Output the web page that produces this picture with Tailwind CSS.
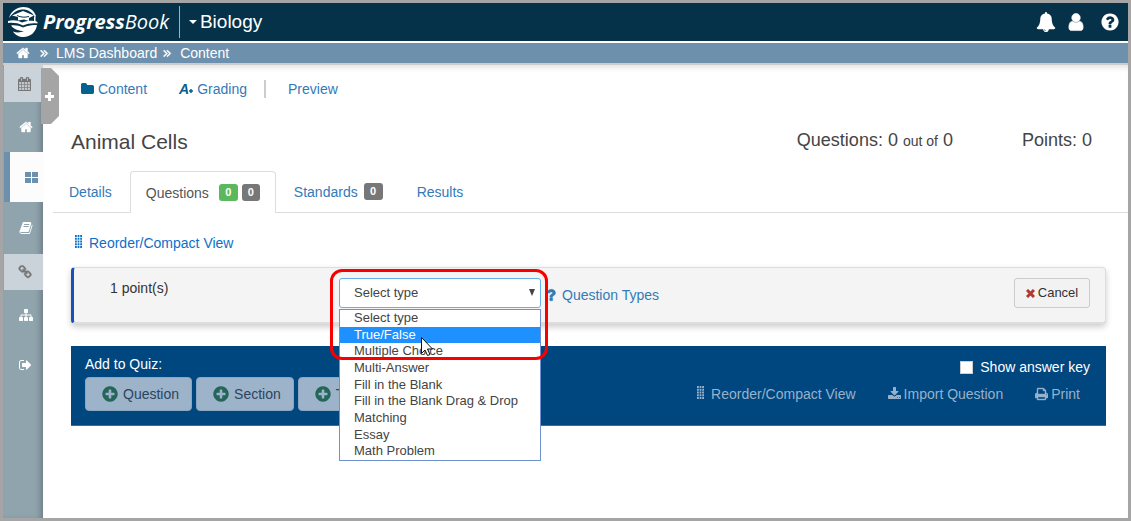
<!DOCTYPE html>
<html lang="en">
<head>
<meta charset="utf-8">
<meta name="viewport" content="width=device-width, initial-scale=1">
<title>Animal Cells - ProgressBook</title>
<script src="https://cdn.jsdelivr.net/npm/@tailwindcss/browser@4"></script>
</head>
<body class="bg-white font-['Liberation_Sans',Arial,sans-serif] text-sm leading-5 text-[#333]">
<svg class="hidden" aria-hidden="true">
  <symbol id="home" viewBox="0 0 1792 1792"><path d="M1472 992v480q0 26-19 45t-45 19h-384v-384h-256v384h-384q-26 0-45-19t-19-45v-480q0-1 .5-3t.5-3l575-474 575 474q1 2 1 6zm223-69l-62 74q-8 9-21 11h-3q-13 0-21-7l-692-577-692 577q-12 8-24 7-13-2-21-11l-62-74q-8-10-7-23.5t11-21.5l719-599q32-26 76-26t76 26l244 204v-195q0-14 9-23t23-9h192q14 0 23 9t9 23v408l219 182q10 8 11 21.5t-7 23.5z" stroke="currentColor" stroke-width="50"/></symbol>
  <symbol id="raquo" viewBox="0 0 1792 1792"><path d="M979 960q0 13-10 23l-466 466q-10 10-23 10t-23-10l-70-70q-10-10-10-23t10-23l373-373-373-373q-10-10-10-23t10-23l70-70q10-10 23-10t23 10l466 466q10 10 10 23zm484 0q0 13-10 23l-466 466q-10 10-23 10t-23-10l-70-70q-10-10-10-23t10-23l373-373-373-373q-10-10-10-23t10-23l70-70q10-10 23-10t23 10l466 466q10 10 10 23z" stroke="currentColor" stroke-width="90"/></symbol>
  <symbol id="plus" viewBox="0 0 1792 1792"><path d="M1344 960v-128q0-26-19-45t-45-19h-256v-256q0-26-19-45t-45-19h-128q-26 0-45 19t-19 45v256h-256q-26 0-45 19t-19 45v128q0 26 19 45t45 19h256v256q0 26 19 45t45 19h128q26 0 45-19t19-45v-256h256q26 0 45-19t19-45zm320-64q0 209-103 385.500t-279.500 279.500-385.500 103-385.500-103-279.500-279.500-103-385.500 103-385.500 279.500-279.500 385.500-103 385.500 103 279.500 279.500 103 385.500z"/></symbol>
  <symbol id="grip" viewBox="0 0 7 13"><path d="M0 0h1.800v2H0zM2.600 0h1.800v2H2.600zM5.200 0H7v2H5.200zM0 2.800h1.800v2H0zM2.600 2.800h1.800v2H2.600zM5.200 2.800H7v2H5.200zM0 5.500h1.800v2H0zM2.600 5.500h1.800v2H2.600zM5.200 5.500H7v2H5.200zM0 8.200h1.800v2H0zM2.600 8.200h1.800v2H2.600zM5.200 8.200H7v2H5.200zM0 11h1.800v2H0zM2.600 11h1.800v2H2.600zM5.200 11H7v2H5.200z"/></symbol>
</svg>

<div class="flex min-h-screen flex-col border-3 border-[#a5a5a5]">
  <header class="flex h-[38px] items-center bg-[#053249] pr-2 text-white">
    <a href="#" class="flex items-center pl-[5px]" aria-label="ProgressBook">
      <svg class="h-[30px] w-[30px]" viewBox="0 0 30 30" fill="#fff">
        <path d="M1 11C3 4 9 0 15.500 0 21 0 26 3 28 9l-1 1C24 5 20 2.500 15 2.500 10 2.500 5 5 1 11z"/>
        <path d="M4 8.500L15 4l11 4.500-5 2.500v3l-5-1.500-6 1V10z"/>
        <path d="M9 8.500c4 2 8 2 12 1" fill="none" stroke="#053249"/>
        <path d="M0 14c5-1.500 9-1 14 1.500 4-1.500 8-2 12-1.500V9.500h1.500V14l2 1v1.500C24 16 20 16.500 15 18.500 10 16 5 15.500 0 16z"/>
        <path d="M3 18.500c4-.5 8 0 12 2 5-2 9-2.500 14-2.500-1 7-6.500 12-13.500 12C11 30 7 28 5 24.500c4 1.500 8 1 11-.5-5 0-10-1.500-13-5.500z"/>
      </svg>
      <span class="ml-[5px] font-['Open_Sans',sans-serif] text-xl leading-7 italic"><b>Progress</b>Book</span>
    </a>
    <span class="ml-2.5 h-8 w-px bg-[#9fb2bd]"></span>
    <button type="button" class="ml-[9px] flex items-center gap-[3px] text-[19px] leading-6">
      <svg class="h-1 w-2" viewBox="0 0 8 4" fill="currentColor"><path d="M0 0h8L4 4z"/></svg>Biology
    </button>
    <div class="ml-auto flex items-center gap-[10px]">
      <button type="button" aria-label="Notifications"><svg class="size-5" viewBox="0 0 1792 1792" fill="currentColor"><path d="M912 1696q0-16-16-16-59 0-101.500-42.500t-42.500-101.500q0-16-16-16t-16 16q0 73 51.500 124.500t124.500 51.500q16 0 16-16zm816-288q0 52-38 90t-90 38h-448q0 106-75 181t-181 75-181-75-75-181h-448q-52 0-90-38t-38-90q50-42 91-88t85-119.500 74.500-158.500 50-206 19.500-260q0-152 117-282.500t307-158.500q-8-19-8-39 0-40 28-68t68-28 68 28 28 68q0 20-8 39 190 28 307 158.500t117 282.500q0 139 19.500 260t50 206 74.500 158.500 85 119.500 91 88z"/></svg></button>
      <button type="button" aria-label="Account"><svg class="size-5" viewBox="0 0 1792 1792" fill="currentColor"><path d="M1536 1399q0 109-62.500 187t-150.500 78h-854q-88 0-150.500-78t-62.500-187q0-85 8.500-160.500t31.500-152 58.500-131 94-89 134.500-34.500q131 128 313 128t313-128q76 0 134.500 34.500t94 89 58.500 131 31.500 152 8.500 160.500zm-256-887q0 159-112.500 271.500t-271.500 112.500-271.500-112.500-112.500-271.500 112.500-271.500 271.500-112.500 271.500 112.500 112.500 271.500z" stroke="currentColor" stroke-width="50"/></svg></button>
      <button type="button" aria-label="Help" class="ml-1"><svg class="size-5" viewBox="0 0 1792 1792" fill="currentColor"><path d="M1024 1376v-192q0-14-9-23t-23-9h-192q-14 0-23 9t-9 23v192q0 14 9 23t23 9h192q14 0 23-9t9-23zm256-672q0-88-55.500-163t-138.500-116-170-41q-243 0-371 213-15 24 8 42l132 100q7 6 19 6 16 0 25-12 53-68 86-92 34-24 86-24 48 0 85.500 26t37.500 59q0 38-20 61t-68 45q-63 28-115.500 86.500t-52.500 125.500v36q0 14 9 23t23 9h192q14 0 23-9t9-23q0-19 21.500-49.500t54.500-49.500q32-18 49-28.500t46-35 44.500-48 28-60.500 12.500-81zm384 192q0 209-103 385.500t-279.500 279.500-385.500 103-385.500-103-279.500-279.500-103-385.500 103-385.500 279.500-279.500 385.500-103 385.500 103 279.500 279.500 103 385.500z"/></svg></button>
    </div>
  </header>

  <nav aria-label="Breadcrumb" class="flex h-6 items-center border-t-2 border-b-2 border-t-white border-b-[#ccc] bg-[#6d90ad] pl-[13px] text-white">
    <a href="#" aria-label="Home"><svg class="size-[14px]" fill="currentColor"><use href="#home"/></svg></a>
    <svg class="ml-2 size-3" fill="currentColor"><use href="#raquo"/></svg>
    <a href="#" class="ml-1.5">LMS Dashboard</a>
    <svg class="ml-1 size-3" fill="currentColor"><use href="#raquo"/></svg>
    <a href="#" class="ml-[7px]">Content</a>
  </nav>

  <div class="flex grow">
    <nav aria-label="Main" class="relative w-10 shrink-0 bg-[#90a4ae] text-white shadow-[inset_-5px_0_6px_-3px_#0004]">
      <a href="#" aria-label="Calendar" class="ml-px flex h-[37px] items-center bg-[#cad3d9] pl-3.5 text-[#777]"><svg class="h-[14px] w-[13px]" viewBox="64 0 1664 1792" fill="currentColor"><path d="M192 1664h288v-288h-288v288zm352 0h320v-288h-320v288zm-352-352h288v-320h-288v320zm352 0h320v-320h-320v320zm-352-384h288v-288h-288v288zm736 736h320v-288h-320v288zm-384-736h320v-288h-320v288zm768 736h288v-288h-288v288zm-384-352h320v-320h-320v320zm-352-864v-288q0-13-9.500-22.500t-22.500-9.500h-64q-13 0-22.500 9.500t-9.500 22.500v288q0 13 9.500 22.500t22.500 9.500h64q13 0 22.500-9.500t9.500-22.500zm736 864h288v-320h-288v320zm-384-384h320v-288h-320v288zm384 0h288v-288h-288v288zm32-480v-288q0-13-9.500-22.500t-22.500-9.500h-64q-13 0-22.500 9.500t-9.500 22.500v288q0 13 9.500 22.500t22.500 9.500h64q13 0 22.500-9.500t9.500-22.500zm384-64v1280q0 52-38 90t-90 38h-1408q-52 0-90-38t-38-90v-1280q0-52 38-90t90-38h128v-96q0-66 47-113t113-47h64q66 0 113 47t47 113v96h384v-96q0-66 47-113t113-47h64q66 0 113 47t47 113v96h128q52 0 90 38t38 90z" stroke="currentColor" stroke-width="30"/></svg></a>
      <a href="#" aria-label="Home" class="flex h-[50px] items-center pl-4"><svg class="size-[14px]" fill="currentColor"><use href="#home"/></svg></a>
      <a href="#" aria-label="Dashboard" class="ml-px flex h-[50px] items-center border-l-6 border-[#6d90ad] bg-[#fcfcfc] pl-[15px] text-[#6d90ad]"><svg class="h-[11px] w-[13px]" viewBox="0 0 13 11" fill="currentColor"><path d="M0 0h6v5H0zM7 0h6v5H7zM0 6h6v5H0zM7 6h6v5H7z"/></svg></a>
      <a href="#" aria-label="Gradebook" class="flex h-[52px] items-center pl-4"><svg class="size-[14px]" viewBox="0 0 1792 1792" fill="currentColor"><path d="M1703 478q40 57 18 129l-275 906q-19 64-76.500 107.500t-122.500 43.500h-923q-77 0-148.500-53.500t-99.500-131.500q-24-67-2-127 0-4 3-27t4-37q1-8-3-21.500t-3-19.500q2-11 8-21t16.500-23.500 16.500-23.500q23-38 45-91.500t30-91.500q3-10 .5-30t-.5-28q3-11 17-28t17-23q21-36 42-92t25-90q1-9-2.500-32t.5-28q4-13 22-30.500t22-22.500q19-26 42.500-84.500t27.500-96.500q1-8-3-25.500t-2-26.500q2-8 9-18t18-23 17-21q8-12 16.500-30.500t15-35 16-36 19.500-32 26.500-23.500 36-11.500 47.500 5.500l-1 3q38-9 51-9h761q74 0 114 56t18 130l-274 906q-36 119-71.500 153.500t-128.500 34.500h-869q-27 0-38 15-11 16-1 43 24 70 144 70h923q29 0 56-15.500t35-41.500l300-987q7-22 5-57 38 15 59 43zm-1064 2q-4 13 2 22.500t20 9.500h608q13 0 25.500-9.500t16.500-22.500l21-64q4-13-2-22.500t-20-9.500h-608q-13 0-25.500 9.500t-16.500 22.500zm-83 256q-4 13 2 22.500t20 9.500h608q13 0 25.500-9.500t16.500-22.500l21-64q4-13-2-22.500t-20-9.500h-608q-13 0-25.500 9.500t-16.500 22.500z"/></svg></a>
      <a href="#" aria-label="Links" class="ml-px flex h-9 items-center bg-[#cad3d9] pl-3.5 text-[#777]"><svg class="size-[14px]" viewBox="0 0 1792 1792" fill="currentColor"><path d="M1520 1216q0-40-28-68l-208-208q-28-28-68-28-42 0-72 32 3 3 19 18.500t21.500 21.500 15 19 13 25.500 3.500 27.500q0 40-28 68t-68 28q-15 0-27.500-3.500t-25.500-13-19-15-21.500-21.500-18.500-19q-33 31-33 73 0 40 28 68l206 207q27 27 68 27 40 0 68-26l147-146q28-28 28-67zm-703-705q0-40-28-68l-206-207q-28-28-68-28-39 0-68 27l-147 146q-28 28-28 67 0 40 28 68l208 208q27 27 68 27 42 0 72-31-3-3-19-18.500t-21.500-21.500-15-19-13-25.500-3.500-27.500q0-40 28-68t68-28q15 0 27.500 3.500t25.500 13 19 15 21.500 21.500 18.500 19q33-31 33-73zm895 705q0 120-85 203l-147 146q-83 83-203 83-121 0-204-85l-206-207q-83-83-83-203 0-123 88-209l-88-88q-86 88-208 88-120 0-204-84l-208-208q-84-84-84-204t85-203l147-146q83-83 203-83 121 0 204 85l206 207q83 83 83 203 0 123-88 209l88 88q86-88 208-88 120 0 204 84l208 208q84 84 84 204z" stroke="currentColor" stroke-width="60"/></svg></a>
      <a href="#" aria-label="Organization" class="flex h-[50px] items-center pl-4"><svg class="size-[14px]" viewBox="0 0 1792 1792" fill="currentColor"><path d="M1792 1248v320q0 40-28 68t-68 28h-320q-40 0-68-28t-28-68v-320q0-40 28-68t68-28h96v-192h-512v192h96q40 0 68 28t28 68v320q0 40-28 68t-68 28h-320q-40 0-68-28t-28-68v-320q0-40 28-68t68-28h96v-192h-512v192h96q40 0 68 28t28 68v320q0 40-28 68t-68 28h-320q-40 0-68-28t-28-68v-320q0-40 28-68t68-28h96v-192q0-52 38-90t90-38h512v-192h-96q-40 0-68-28t-28-68v-320q0-40 28-68t68-28h320q40 0 68 28t28 68v320q0 40-28 68t-68 28h-96v192h512q52 0 90 38t38 90v192h96q40 0 68 28t28 68z"/></svg></a>
      <a href="#" aria-label="Sign out" class="flex h-[50px] items-center pl-4"><svg class="size-[14px]" viewBox="64 0 1792 1792" fill="currentColor"><path d="M704 1440q0 4 1 20t.5 26.500-3 23.500-10 19.500-20.500 6.500h-320q-119 0-203.500-84.500t-84.500-203.500v-704q0-119 84.500-203.500t203.500-84.500h320q13 0 22.500 9.500t9.500 22.500q0 4 1 20t.5 26.500-3 23.500-10 19.500-20.500 6.500h-320q-66 0-113 47t-47 113v704q0 66 47 113t113 47h312l11.500 1 11.500 3 8 5.500 7 9 2 13.500zm928-544q0 26-19 45l-544 544q-19 19-45 19t-45-19-19-45v-288h-448q-26 0-45-19t-19-45v-384q0-26 19-45t45-19h448v-288q0-26 19-45t45-19 45 19l544 544q19 19 19 45z"/></svg></a>
      <button type="button" aria-label="Expand menu" class="absolute top-[3px] left-[38px] z-10"><svg class="h-14 w-[18px]" viewBox="0 0 18 56"><path d="M0 0h10l8 8v40l-8 8H0z" fill="#a5a5a5"/><path d="M7 24h3v3h3v3h-3v3H7v-3H4v-3h3z" fill="#fff"/></svg></button>
    </nav>

    <main class="min-w-0 grow pb-4 pl-2.5 shadow-[inset_0_6px_6px_-4px_#0002]">
      <div class="flex items-center pt-3.5 pl-7 text-[#337ab7]">
        <a href="#" class="flex items-center gap-1"><svg class="h-[14px] w-[13px] text-[#05618f]" viewBox="64 0 1664 1792" fill="currentColor"><path d="M1728 608v704q0 92-66 158t-158 66h-1216q-92 0-158-66t-66-158v-960q0-92 66-158t158-66h320q92 0 158 66t66 158v32h672q92 0 158 66t66 158z"/></svg>Content</a>
        <a href="#" class="ml-8 flex items-center gap-1"><span class="flex items-center font-bold text-[#05618f]"><i>A</i><svg class="mt-1 size-1" viewBox="0 0 4 4" stroke="currentColor" stroke-width="1.500"><path d="M2 0v4M0 2h4"/></svg></span>Grading</a>
        <span class="ml-[17px] h-[18px] w-0.5 bg-[#ccc]"></span>
        <a href="#" class="ml-[22px]">Preview</a>
      </div>

      <div class="mt-[15px] flex h-14 items-center pr-9 pl-[18px] text-[#444]">
        <h1 class="text-[21px] leading-7">Animal Cells</h1>
        <p class="-mt-1 ml-auto text-lg leading-6">Questions: 0 <span class="text-sm">out of</span> 0</p>
        <p class="-mt-1 ml-[69px] text-lg leading-6">Points: 0</p>
      </div>

      <nav aria-label="Quiz" class="mt-px flex gap-0.5 border-b border-[#ddd] text-[#337ab7]">
        <a href="#" class="flex h-[41px] items-center px-4">Details</a>
        <a href="#" aria-current="page" class="-mb-px flex h-[42px] items-center rounded-t border border-b-0 border-[#ddd] bg-white px-[15px] text-[#555]">Questions
          <span class="ml-2.5 w-[19px] rounded-[3px] bg-[#5cb85c] text-center text-[11px] leading-[17px] font-bold text-white">0</span><span class="ml-1 w-[18px] rounded-[3px] bg-[#777] text-center text-[11px] leading-[17px] font-bold text-white">0</span></a>
        <a href="#" class="flex h-[41px] items-center px-4">Standards<span class="ml-1.5 w-[19px] rounded-[3px] bg-[#777] text-center text-[11px] leading-[17px] font-bold text-white">0</span></a>
        <a href="#" class="flex h-[41px] items-center px-4">Results</a>
      </nav>

      <div class="pr-[22px] pl-[18px]">
        <a href="#" class="mt-5 ml-1 inline-flex items-center gap-[7px] text-[#0b70c8]"><svg class="-mt-1 h-[13px] w-[7px]" fill="currentColor"><use href="#grip"/></svg>Reorder/Compact View</a>

        <section class="mt-3.5 flex h-[57px] items-start rounded border border-b-2 border-l-3 border-[#ddd] border-l-[#1650b8] bg-[#f4f4f4] pt-2.5 pr-[15px] shadow-[0_3px_6px_#0003]">
          <p class="w-[265px] shrink-0 pl-9">1 point(s)</p>
          <div class="relative z-20 w-[202px] shrink-0">
            <select aria-label="Question type" class="block h-[30px] w-full appearance-none rounded-[3px] border border-[#66afe9] bg-white px-3.5 text-[13px] text-[#444]">
              <option>Select type</option><option>True/False</option><option>Multiple Choice</option><option>Multi-Answer</option><option>Fill in the Blank</option><option>Fill in the Blank Drag &amp; Drop</option><option>Matching</option><option>Essay</option><option>Math Problem</option>
            </select>
            <svg class="pointer-events-none absolute top-[11px] right-1.5 h-[7px] w-1.5" viewBox="0 0 6 7" fill="#444"><path d="M0 0h6L3 7z"/></svg>
            <ul role="listbox" aria-label="Question types" class="absolute top-[31px] left-0 flex h-[152px] w-full flex-col border border-[#6f91cf] bg-white text-[13px] leading-4 text-[#444]">
              <li role="option" class="flex-1 pl-3.5">Select type</li>
              <li role="option" aria-selected="true" class="flex-1 bg-[#1e90ff] pl-3.5 text-white">True/False</li>
              <li role="option" class="flex-1 pl-3.5">Multiple Choice</li>
              <li role="option" class="flex-1 pl-3.5">Multi-Answer</li>
              <li role="option" class="flex-1 pl-3.5">Fill in the Blank</li>
              <li role="option" class="flex-1 pl-3.5">Fill in the Blank Drag &amp; Drop</li>
              <li role="option" class="flex-1 pl-3.5">Matching</li>
              <li role="option" class="flex-1 pl-3.5">Essay</li>
              <li role="option" class="flex-1 pl-3.5">Math Problem</li>
            </ul>
            <div class="pointer-events-none absolute -top-[9px] -left-[9px] h-[91px] w-[218px] rounded-xl border-3 border-[#f80000]"></div>
            <svg class="pointer-events-none absolute top-[59px] left-[82px] h-[19px] w-3" viewBox="0 0 12 19" fill="#fff" stroke="#111" stroke-linejoin="round"><path d="M.5.500v16l3.500-3.500 2.500 5.500 2.500-1-2.500-5.500h5z"/></svg>
          </div>
          <a href="#" class="mt-[7px] ml-1 flex items-center gap-px text-[#337ab7]"><svg class="size-4" viewBox="230 0 1792 1792" fill="currentColor"><path d="M1088 1256v240q0 16-12 28t-28 12h-240q-16 0-28-12t-12-28v-240q0-16 12-28t28-12h240q16 0 28 12t12 28zm316-600q0 54-15.500 101t-35 76.500-55 59.500-57.500 43.500-61 35.500q-41 23-68.500 65t-27.500 67q0 17-12 32.500t-28 15.500h-240q-15 0-25.500-18.500t-10.500-37.500v-45q0-83 65-156.500t143-108.500q59-27 84-56t25-76q0-42-46.500-74t-107.500-32q-65 0-108 29-35 25-107 115-13 16-31 16-12 0-25-8l-164-125q-13-10-15.500-25t5.500-28q160-266 464-266 80 0 161 31t146 83 106 127.500 41 158.500z" stroke="currentColor" stroke-width="50"/></svg>Question Types</a>
          <button type="button" class="ml-auto flex h-[30px] w-[76px] items-center justify-center gap-[3px] rounded-[3px] border border-[#ccc] bg-[#f2f2f2] text-[13px]"><svg class="size-[9px]" viewBox="0 0 9 9" stroke="#b23a35" stroke-width="3"><path d="M1 1l7 7M8 1l-7 7"/></svg>Cancel</button>
        </section>

        <section class="mt-[22px] flex h-20 items-start justify-between border-b border-[#1f75c5] bg-[#00467f] pt-2 pr-4 pl-3.5 text-white">
          <div>
            <p>Add to Quiz:</p>
            <div class="mt-[3px] flex gap-1 text-[#2b4560]">
              <button type="button" class="flex h-[34px] items-center gap-1 rounded border border-[#8ba6c0] bg-[#9cb3ca] pr-3 pl-[15px]"><svg class="size-[18px] text-[#246659]" fill="currentColor"><use href="#plus"/></svg>Question</button>
              <button type="button" class="flex h-[34px] items-center gap-1 rounded border border-[#8ba6c0] bg-[#9cb3ca] pr-3 pl-[15px]"><svg class="size-[18px] text-[#246659]" fill="currentColor"><use href="#plus"/></svg>Section</button>
              <button type="button" class="flex h-[34px] items-center gap-1 rounded border border-[#8ba6c0] bg-[#9cb3ca] pr-3 pl-[15px]"><svg class="size-[18px] text-[#246659]" fill="currentColor"><use href="#plus"/></svg>Text</button>
            </div>
          </div>
          <div class="pt-[3px]">
            <label class="flex items-center justify-end gap-[7px]"><input type="checkbox" class="size-[13px] appearance-none border border-[#ccc] bg-white">Show answer key</label>
            <div class="mt-[7px] flex items-center pr-2.5 text-[#96b2cb]">
              <a href="#" class="flex items-center gap-[7px]"><svg class="-mt-1 h-[13px] w-[7px]" fill="currentColor"><use href="#grip"/></svg>Reorder/Compact View</a>
              <a href="#" class="ml-8 flex items-center gap-[3px]"><svg class="h-[14px] w-[13px]" viewBox="64 0 1664 1792" fill="currentColor"><path d="M1344 1344q0-26-19-45t-45-19-45 19-19 45 19 45 45 19 45-19 19-45zm256 0q0-26-19-45t-45-19-45 19-19 45 19 45 45 19 45-19 19-45zm128-224v320q0 40-28 68t-68 28h-1472q-40 0-68-28t-28-68v-320q0-40 28-68t68-28h465l135 136q58 56 136 56t136-56l136-136h464q40 0 68 28t28 68zm-325-569q17 41-14 70l-448 448q-18 19-45 19t-45-19l-448-448q-31-29-14-70 17-39 59-39h256v-448q0-26 19-45t45-19h256q26 0 45 19t19 45v448h256q42 0 59 39z"/></svg>Import Question</a>
              <a href="#" class="ml-8 flex items-center gap-[3px]"><svg class="h-[14px] w-[13px]" viewBox="64 0 1664 1792" fill="currentColor"><path d="M448 1536h896v-256h-896v256zm0-640h896v-384h-160q-40 0-68-28t-28-68v-160h-640v640zm1152 64q0-26-19-45t-45-19-45 19-19 45 19 45 45 19 45-19 19-45zm128 0v416q0 13-9.500 22.500t-22.500 9.500h-224v160q0 40-28 68t-68 28h-960q-40 0-68-28t-28-68v-160h-224q-13 0-22.500-9.500t-9.500-22.500v-416q0-79 56.500-135.500t135.500-56.500h64v-544q0-40 28-68t68-28h672q40 0 88 20t76 48l152 152q28 28 48 76t20 88v256h64q79 0 135.500 56.500t56.500 135.500z" stroke="currentColor" stroke-width="50"/></svg>Print</a>
            </div>
          </div>
        </section>
      </div>
    </main>
  </div>
</div>
</body>
</html>
